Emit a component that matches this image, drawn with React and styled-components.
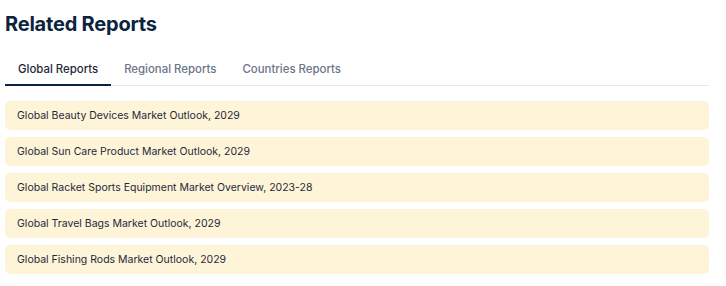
import React, { useState } from "react";
import styled, { createGlobalStyle } from "styled-components";

const Global = createGlobalStyle`
  * { box-sizing: border-box; }
  body { margin: 0; background: #fff; font-family: Inter, "Noto Sans", sans-serif; }
`;

const Wrap = styled.div`
  padding: 12px 17px 0 5px;
  display: flex;
  flex-direction: column;
`;

const Title = styled.h2`
  margin: 0;
  font-size: 20px;
  line-height: 24px;
  font-weight: 700;
  color: #0c2340;
  letter-spacing: -0.2px;
`;

const Tabs = styled.div`
  display: flex;
  margin-top: 26px;
  border-bottom: 1px solid #e5e7eb;
`;

const Tab = styled.button`
  border: none;
  background: none;
  padding: 0 13px 8px;
  font-family: inherit;
  font-size: 11.4px;
  line-height: 14px;
  font-weight: 500;
  cursor: pointer;
  color: ${(p) => (p.$active ? "#1f2937" : "#6b7489")};
  border-bottom: 2px solid ${(p) => (p.$active ? "#0c2340" : "transparent")};
  margin-bottom: -1px;
`;

const List = styled.div`
  display: flex;
  flex-direction: column;
  gap: 7px;
  margin-top: 15px;
`;

const Item = styled.a`
  display: flex;
  align-items: center;
  height: 29px;
  padding: 0 12px;
  background: #fef4d8;
  border-radius: 5px;
  font-size: 10.5px;
  color: #1e293b;
  text-decoration: none;
`;

const tabs = ["Global Reports", "Regional Reports", "Countries Reports"];
const items = [
  "Global Beauty Devices Market Outlook, 2029",
  "Global Sun Care Product Market Outlook, 2029",
  "Global Racket Sports Equipment Market Overview, 2023-28",
  "Global Travel Bags Market Outlook, 2029",
  "Global Fishing Rods Market Outlook, 2029",
];

export default function App() {
  const [active, setActive] = useState(0);
  return (
    <>
      <Global />
      <Wrap>
        <Title>Related Reports</Title>
        <Tabs>
          {tabs.map((t, i) => (
            <Tab key={t} $active={i === active} onClick={() => setActive(i)}>
              {t}
            </Tab>
          ))}
        </Tabs>
        <List>
          {items.map((it) => (
            <Item key={it} href="#">{it}</Item>
          ))}
        </List>
      </Wrap>
    </>
  );
}
